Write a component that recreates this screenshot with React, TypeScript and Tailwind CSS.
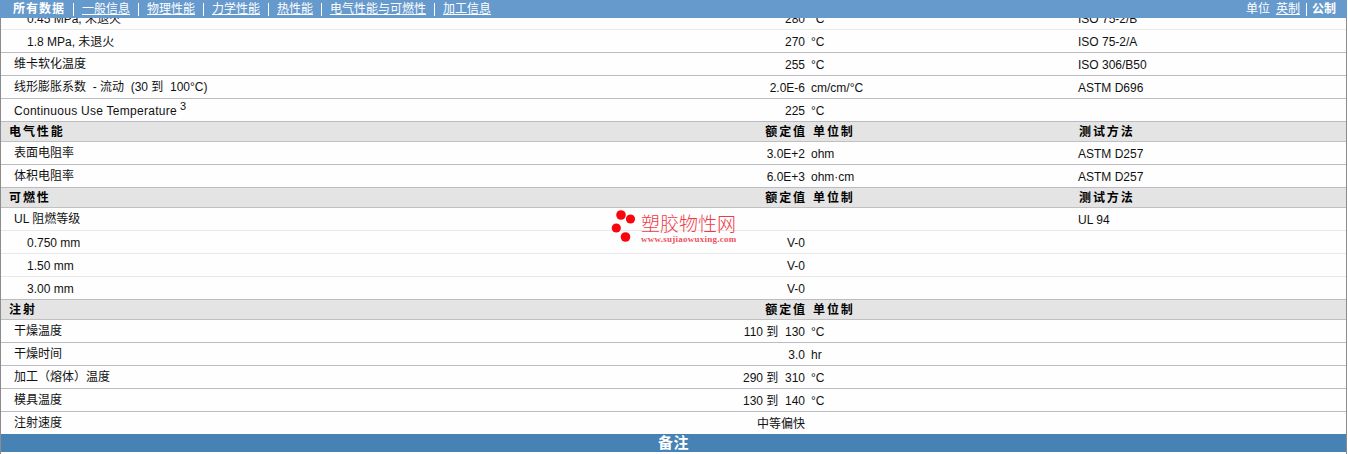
const cjk = "font-['Liberation_Sans','Noto_Sans_CJK_SC',sans-serif]";

type Row = { l: string; sup?: string; v?: string; u?: string; t?: string; sub?: boolean; light?: boolean; latin?: boolean };
type Item = Row | { h: string; t?: boolean };

const items: Item[] = [
  { l: "0.45 MPa, 未退火", v: "280", u: "°C", t: "ISO 75-2/B", sub: true, light: true, latin: true },
  { l: "1.8 MPa, 未退火", v: "270", u: "°C", t: "ISO 75-2/A", sub: true, latin: true },
  { l: "维卡软化温度", v: "255", u: "°C", t: "ISO 306/B50" },
  { l: "线形膨胀系数  - 流动  (30 到  100°C)", v: "2.0E-6", u: "cm/cm/°C", t: "ASTM D696" },
  { l: "Continuous Use Temperature", sup: "3", v: "225", u: "°C", latin: true },
  { h: "电气性能", t: true },
  { l: "表面电阻率", v: "3.0E+2", u: "ohm", t: "ASTM D257" },
  { l: "体积电阻率", v: "6.0E+3", u: "ohm·cm", t: "ASTM D257" },
  { h: "可燃性", t: true },
  { l: "UL 阻燃等级", t: "UL 94", light: true },
  { l: "0.750 mm", v: "V-0", sub: true, light: true, latin: true },
  { l: "1.50 mm", v: "V-0", sub: true, light: true, latin: true },
  { l: "3.00 mm", v: "V-0", sub: true, latin: true },
  { h: "注射" },
  { l: "干燥温度", v: "110 到  130", u: "°C" },
  { l: "干燥时间", v: "3.0", u: "hr" },
  { l: "加工（熔体）温度", v: "290 到  310", u: "°C" },
  { l: "模具温度", v: "130 到  140", u: "°C" },
  { l: "注射速度", v: "中等偏快" },
];

const navs = ["一般信息", "物理性能", "力学性能", "热性能", "电气性能与可燃性", "加工信息"];

function Header({ h, t }: { h: string; t?: boolean }) {
  return (
    <div className="flex h-[20px] shrink-0 items-center border-b border-[#c0c0c0] bg-[#e4e4e4] text-[12px] font-bold tracking-[1.9px] text-black">
      <div className="w-[710px] pl-[8px]">{h}</div>
      <div className="w-[96px] whitespace-pre text-right">额定值</div>
      <div className="w-[272px] pl-[6px]">单位制</div>
      <div>{t ? "测试方法" : ""}</div>
    </div>
  );
}

function DataRow({ r }: { r: Row }) {
  return (
    <div className={`flex h-[23px] shrink-0 items-center border-b bg-[#fefefe] text-[12px] leading-none text-[#111] ${r.light ? "border-[#e8e8e8]" : "border-[#bdbbc2]"}`}>
      <div className={`w-[710px] whitespace-pre ${r.sub ? "pl-[26px]" : "pl-[13px]"} ${r.latin ? "pt-[2px]" : ""} ${r.sup ? "tracking-[0.27px]" : ""}`}>
        {r.l}
        {r.sup && <sup className="relative -top-[5px] ml-[3px] align-baseline text-[11px]">{r.sup}</sup>}
      </div>
      <div className="w-[94px] whitespace-pre pt-[2px] text-right">{r.v}</div>
      <div className="w-[273px] pl-[6px] pt-[2px]">{r.u}</div>
      <div className="pt-[2px]">{r.t}</div>
    </div>
  );
}

function Logo() {
  return (
    <div className="pointer-events-none absolute left-[611px] top-[209px] z-10 flex items-start">
      <svg width="28" height="34" viewBox="0 0 28 34" className="shrink-0">
        <circle cx="10" cy="6" r="4.8" fill="#f8060c" />
        <circle cx="19.5" cy="10" r="4.6" fill="#f8060c" />
        <circle cx="5.3" cy="19" r="4.6" fill="#f8060c" />
        <circle cx="14.5" cy="28" r="4.8" fill="#f8060c" />
      </svg>
      <div className="ml-[2px] flex flex-col">
        <div className="mt-[5px] text-[19px] leading-[21px] font-light text-[#ee3a4a]">塑胶物性网</div>
        <div className="-mt-[1px] font-['Liberation_Serif',serif] text-[9px] leading-[10px] font-bold tracking-[0.25px] text-[#ee5060]">www.sujiaowuxing.com</div>
      </div>
    </div>
  );
}

export default function App() {
  return (
    <div className={`relative h-[454px] w-[1348px] overflow-hidden bg-white ${cjk}`}>
      <div className="mr-[1px] flex h-[18px] items-center justify-between bg-[#6699cc] pl-[13px] pr-[11px] text-[12px] leading-none text-white">
        <div className="flex items-center">
          <span className="pr-[8px] font-bold tracking-[1px]">所有数据</span>
          {navs.map((n) => (
            <span key={n} className="flex items-center">
              <span className="h-[13px] w-px bg-white" />
              <span className="px-[8px] underline">{n}</span>
            </span>
          ))}
        </div>
        <div className="flex items-center">
          <span>单位</span>
          <span className="ml-[6px] underline">英制</span>
          <span className="ml-[6px] h-[13px] w-px bg-white" />
          <span className="ml-[5px] font-bold">公制</span>
        </div>
      </div>
      <div className="mr-[1px] h-[436px] overflow-hidden border-x border-[#8c8c8c]">
        <div className="-mt-[11px] flex flex-col">
          {items.map((it, i) =>
            "h" in it ? <Header key={i} h={it.h} t={it.t} /> : <DataRow key={i} r={it} />
          )}
          <div className="relative -mt-[1px] flex h-[18px] shrink-0 items-center bg-[#4682b4] text-[15px] font-bold tracking-[0.5px] text-white">
            <div className="w-[688px] text-right">备注</div>
          </div>
        </div>
      </div>
      <Logo />
    </div>
  );
}
